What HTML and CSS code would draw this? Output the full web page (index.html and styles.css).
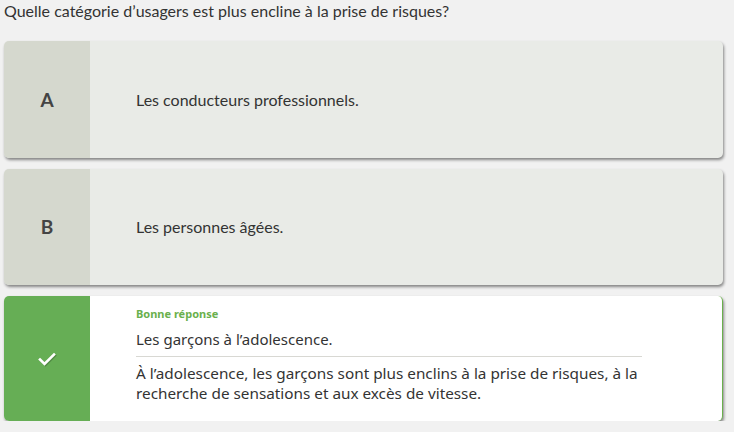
FILE: index.html
```html
<!DOCTYPE html>
<html lang="fr">
<head>
<meta charset="utf-8">
<link rel="stylesheet" href="styles.css">
</head>
<body>
<div class="page">
  <p class="question">Quelle catégorie d’usagers est plus encline à la prise de risques?</p>
  <div class="options">
    <div class="card">
      <div class="letter">A</div>
      <div class="content"><span class="answer">Les conducteurs professionnels.</span></div>
    </div>
    <div class="card">
      <div class="letter">B</div>
      <div class="content"><span class="answer">Les personnes âgées.</span></div>
    </div>
    <div class="card card-correct">
      <div class="letter letter-correct">
        <svg width="18" height="14" viewBox="0 0 18 14" class="check"><path d="M2 7.5 L6.5 12 L16 2.5" fill="none" stroke="#fff" stroke-width="2.6" stroke-linecap="square"/></svg>
      </div>
      <div class="content content-correct">
        <div class="label">Bonne réponse</div>
        <div class="answer-correct">Les garçons à l’adolescence.</div>
        <div class="explain">À l’adolescence, les garçons sont plus enclins à la prise de risques, à la recherche de sensations et aux excès de vitesse.</div>
      </div>
    </div>
  </div>
</div>
</body>
</html>
```

FILE: styles.css
```css
* { box-sizing: border-box; }
html, body { margin: 0; padding: 0; }
body {
  background: #f1f1f1;
  font-family: Lato, "Liberation Sans", sans-serif;
  color: #333;
}
.page {
  padding: 0 11px 0 4px;
}
.question {
  margin: 0;
  padding-top: 1px;
  font-size: 16px;
  line-height: 20px;
  color: #333;
}
.options {
  margin-top: 20px;
  display: flex;
  flex-direction: column;
  gap: 11px;
}
.card {
  display: flex;
  background: #e9ebe7;
  border-radius: 5px;
  overflow: hidden;
  box-shadow: 1px 2px 3px rgba(0,0,0,0.45);
  min-height: 116.5px;
}
.letter {
  width: 86px;
  flex: none;
  background: #d5d8ce;
  display: flex;
  align-items: center;
  justify-content: center;
  font-size: 19px;
  font-weight: 700;
  color: #444;
}
.content {
  flex: 1;
  display: flex;
  align-items: center;
  padding-left: 46px;
}
.answer {
  font-size: 16px;
  color: #333;
}
.card-correct {
  background: #fff;
  border-right: 1px solid #6ab04c;
  min-height: 125px;
}
.letter-correct {
  background: #66ae55;
}
.check {
  filter: drop-shadow(1px 1px 0 rgba(0,0,0,0.2));
}
.content-correct {
  display: block;
  padding: 11px 80px 14px 46px;
  font-family: "Noto Sans", "Open Sans", sans-serif;
}
.label {
  font-size: 11px;
  font-weight: 700;
  color: #6ab04c;
  line-height: 14px;
}
.answer-correct {
  font-size: 15px;
  line-height: 20px;
  margin-top: 8px;
  padding-bottom: 7px;
  border-bottom: 1px solid #d8d8d3;
  color: #333;
}
.explain {
  font-size: 15.3px;
  line-height: 20px;
  margin-top: 6px;
  color: #333;
}
```
